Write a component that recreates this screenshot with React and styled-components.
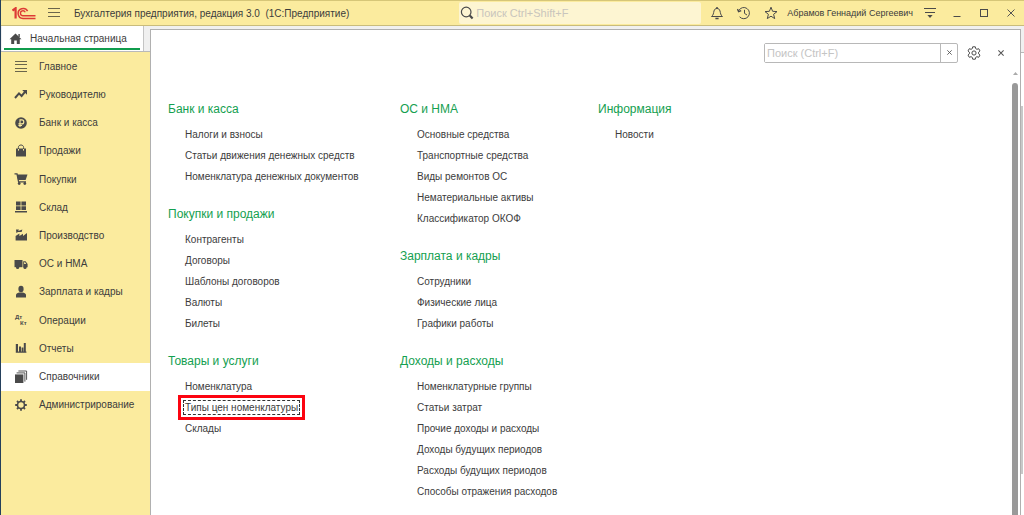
import React, { useState } from 'react'
import styled, { createGlobalStyle } from 'styled-components'

const GlobalStyle = createGlobalStyle`
    * {
        box-sizing: border-box;
    }
    body {
        margin: 0;
        font-family: "Liberation Sans", Arial, sans-serif;
        font-size: 10px;
        color: #3c3c3c;
        background: #fff;
    }
    button, input {
        font-family: inherit;
        color: inherit;
    }
    ul {
        list-style: none;
        margin: 0;
        padding: 0;
    }
    a {
        color: inherit;
        text-decoration: none;
    }
    svg {
        flex-shrink: 0;
    }
`;

const Window = styled.div`
    display: flex;
    flex-direction: column;
    min-height: 100vh;
    border-left: 1px solid #24405c;
`;

const TitleBar = styled.header`
    display: flex;
    align-items: center;
    height: 26px;
    padding: 0 0 0 11px;
    background: #fbeb9e;
    border-top: 1px solid #d6c678;
    border-bottom: 1px solid #c9bc7c;
`;

const IconButton = styled.button`
    display: flex;
    align-items: center;
    justify-content: center;
    flex-shrink: 0;
    width: ${props => props.$width || 27}px;
    height: 24px;
    padding: 0;
    border: none;
    background: none;
    color: #4a4a4a;
    cursor: pointer;
`;

const Title = styled.h1`
    flex: 1;
    margin: 0 0 0 3px;
    font-size: 10px;
    font-weight: 400;
    white-space: pre;
`;

const GlobalSearch = styled.label`
    display: flex;
    align-items: center;
    width: 242px;
    height: 22px;
    padding-left: 1px;
    margin-right: 2px;
    border-radius: 2px;
    background: #fdf5d2;
    & > input {
        flex: 1;
        min-width: 0;
        border: none;
        background: none;
        padding: 0 2px;
        font-size: 11px;
        outline: none;
    }
    & > input::placeholder {
        color: #c9c5bd;
        opacity: 1;
    }
`;

const UserName = styled.span`
    margin: 0 3px;
    font-size: 9px;
    white-space: nowrap;
`;

const Body = styled.div`
    display: flex;
    flex: 1;
    background: #f0f0f0;
`;

const LeftColumn = styled.div`
    display: flex;
    flex-direction: column;
    flex-shrink: 0;
    width: 149px;
`;

const TabStrip = styled.div`
    height: 26px;
    padding-left: 1px;
    border-bottom: 1px solid #b9b9b9;
`;

const Tab = styled.a`
    display: flex;
    align-items: center;
    width: 142px;
    height: 25px;
    padding-left: 7px;
    gap: 8px;
    background: #fff;
    border-right: 1px solid #c4c4c4;
    box-shadow: inset 2px -1px 0 #fff, inset -3px -1px 0 #fff, inset 0 -3px 0 #109c4c;
    white-space: nowrap;
`;

const Sidebar = styled.nav`
    flex: 1;
    background: #fbeb9e;
`;

const NavList = styled.ul`
    display: grid;
    grid-auto-rows: 1fr;
    min-height: 367px;
`;

const NavItem = styled.a`
    display: flex;
    align-items: center;
    height: 100%;
    padding-left: 12px;
    gap: 10px;
    background: ${props => props.$active ? '#fff' : 'transparent'};
    white-space: nowrap;
    & > svg {
        width: 16px;
        height: 16px;
    }
`;

const Panel = styled.main`
    display: flex;
    flex-direction: column;
    flex: 1;
    min-width: 0;
    margin-top: 3px;
    border: 1px solid #b0b0b0;
    border-bottom: none;
    background: #fff;
`;

const RightEdge = styled.div`
    display: flex;
    width: 3px;
    padding: 54px 1px 41px 0;
    border-top: 26px solid #f0f0f0;
    background: #fff;
    box-shadow: inset 0 1px 0 #b9b9b9;
`;

const BackScroll = styled.div`
    flex: 1;
    background: #c8c8c8;
`;

const PanelTools = styled.div`
    display: flex;
    align-items: center;
    justify-content: flex-end;
    height: 40px;
    padding: 5px 6px 0 0;
`;

const SearchBox = styled.div`
    display: flex;
    width: 194px;
    height: 20px;
    margin-right: 2px;
    border: 1px solid #b8b8b8;
    border-radius: 2px;
    & > input {
        flex: 1;
        min-width: 0;
        padding: 0 2px;
        border: none;
        font-size: 11px;
        outline: none;
    }
    & > input::placeholder {
        color: #c4c4c4;
        opacity: 1;
    }
    & > button {
        width: 17px;
        height: 18px;
        border-left: 1px solid #b8b8b8;
    }
`;

const PanelContent = styled.div`
    display: flex;
    flex: 1;
`;

const Columns = styled.div`
    display: grid;
    grid-template-columns: 232px 198px 1fr;
    align-items: start;
    flex: 1;
    padding: 25px 0 0 17px;
`;

const Column = styled.div`
    display: grid;
    gap: 13px;
`;

const SectionTitle = styled.h2`
    margin: 0;
    font-size: 12px;
    font-weight: 400;
    line-height: 29px;
    color: #14a050;
`;

const SectionLink = styled.li`
    display: flex;
    align-items: center;
    height: 21px;
    padding-left: 16px;
    & > a {
        padding: 0 1px;
        line-height: 13px;
        white-space: nowrap;
        outline: ${props => props.$selected ? '1px dashed #333' : 'none'};
        box-shadow: ${props => props.$selected ? '0 0 0 3px #fff, 0 0 0 6px #fc0410' : 'none'};
    }
`;

const ScrollBar = styled.div`
    display: flex;
    flex-direction: column;
    align-items: center;
    width: 10px;
    gap: 8px;
    padding-top: 2px;
`;

const ScrollThumb = styled.div`
    flex: 1;
    width: 6px;
    border-radius: 3px 3px 0 0;
    background: #999;
`;
// End of styled

const LogoIcon = () => <svg width="24" height="13" viewBox="0 0 24 13" fill="none" stroke="#dd3b35">
    <path d="M0.5 3.6 L3.6 1.2 V11.5" strokeWidth="2.2" />
    <path d="M15.6 4.2 A5 5 0 1 0 11 11.5 H23.5" strokeWidth="1.5" />
    <path d="M13.2 5.2 A2.5 2.5 0 1 0 11 8.8 H23.5" strokeWidth="1.4" />
</svg>

const BurgerIcon = () => <svg width="12" height="10" viewBox="0 0 12 10" fill="none" stroke="#6a654c">
    <path d="M0 0.5 H12 M0 4.5 H12 M0 8.5 H12" />
</svg>

const SearchIcon = () => <svg width="14" height="14" viewBox="0 0 14 14" fill="none" stroke="#4a4a4a">
    <circle cx="6.2" cy="6" r="4.8" strokeWidth="1.2" />
    <path d="M9.8 9.6 L12.6 12.6" strokeWidth="2.2" />
</svg>

const BellIcon = () => <svg width="14" height="14" viewBox="0 0 14 14" fill="none" stroke="#4a4a4a">
    <path d="M1.5 10.5 C3.6 9 3.4 7 4 5 C4.4 3.3 5.4 2.5 7 2.5 C8.6 2.5 9.6 3.3 10 5 C10.6 7 10.4 9 12.5 10.5 Z" />
    <path d="M7 1 V2.5 M5.4 12.6 H8.6" strokeWidth="1.5" />
</svg>

const HistoryIcon = () => <svg width="14" height="14" viewBox="0 0 14 14" fill="none" stroke="#4a4a4a">
    <path d="M1.8 4.6 A5.6 5.6 0 1 1 2.6 10.8" />
    <path d="M7.5 3.8 V7.4 L10 9" />
    <path d="M0.4 3 L1.6 5.6 L4.2 4.6" strokeWidth="1.4" />
</svg>

const StarIcon = () => <svg width="14" height="14" viewBox="0 0 14 14" fill="none" stroke="#4a4a4a">
    <path d="M7 1.2 L8.6 5.3 L13 5.6 L9.6 8.3 L10.7 12.6 L7 10.2 L3.3 12.6 L4.4 8.3 L1 5.6 L5.4 5.3 Z" />
</svg>

const MenuIcon = () => <svg width="12" height="12" viewBox="0 0 12 12" fill="none" stroke="#4a4a4a">
    <path d="M0 1.5 H12 M1 5.5 H11" />
    <path d="M3.4 8 H8.6 L6 11 Z" fill="#4a4a4a" stroke="none" />
</svg>

const MinimizeIcon = () => <svg width="8" height="10" viewBox="0 0 8 10" stroke="#4a4a4a">
    <path d="M0.5 8.5 H7.5" />
</svg>

const MaximizeIcon = () => <svg width="8" height="8" viewBox="0 0 8 8" fill="none" stroke="#4a4a4a">
    <rect x="0.5" y="0.5" width="7" height="7" />
</svg>

const CrossIcon = ({ size }) => <svg width={size} height={size} viewBox="0 0 8 8" fill="none" stroke="#555">
    <path d="M0.5 0.5 L7.5 7.5 M7.5 0.5 L0.5 7.5" strokeWidth={size < 8 ? 1.4 : 1} />
</svg>

const HomeIcon = () => <svg width="13" height="12" viewBox="0 0 13 12" fill="#4a4a4a">
    <path d="M6.5 0.6 L12.5 6.2 H10.8 V11 H7.8 V7.4 H5.2 V11 H2.2 V6.2 H0.5 Z" />
    <path d="M9.4 1 H10.8 V4 H9.4 Z" />
</svg>

const GearIcon = () => <svg width="14" height="14" viewBox="0 0 14 14" fill="none" stroke="#4a4a4a">
    <path d="M5.7 0.8 H8.3 L8.7 2.6 L9.9 3.3 L11.7 2.7 L13 4.9 L11.6 6.2 V7.8 L13 9.1 L11.7 11.3 L9.9 10.7 L8.7 11.4 L8.3 13.2 H5.7 L5.3 11.4 L4.1 10.7 L2.3 11.3 L1 9.1 L2.4 7.8 V6.2 L1 4.9 L2.3 2.7 L4.1 3.3 L5.3 2.6 Z" />
    <circle cx="7" cy="7" r="2.1" />
</svg>

const navIcons = {
    main: <path d="M2 3.5 H14 M2 6.5 H14 M2 10.5 H14 M2 13.5 H14" fill="none" stroke="#6a654c" />,
    chief: <>
        <path d="M2 12 L6 7.4 L8.6 10 L12 5.8" fill="none" stroke="#4a4a4a" strokeWidth="2" />
        <path d="M9.2 4 H14 V8.8 Z" />
    </>,
    bank: <>
        <circle cx="8" cy="8" r="5.8" />
        <path d="M7 12 V4.9 H8.8 A2 2 0 0 1 8.8 8.9 H5.4 M5.4 10.5 H9" fill="none" stroke="#fbeb9e" strokeWidth="1.1" />
    </>,
    sales: <>
        <path d="M3 5.5 H13 V13.5 H3 Z" />
        <path d="M5.4 7 V4.4 C5.4 1.2 10.6 1.2 10.6 4.4 V7" fill="none" stroke="#4a4a4a" />
        <path d="M5.5 6 V7.6 M10.5 6 V7.6" stroke="#fbeb9e" />
    </>,
    purchases: <>
        <path d="M1.5 2.8 H4 L5.6 10.8 H13" fill="none" stroke="#4a4a4a" strokeWidth="1.3" />
        <path d="M4 3.6 H14.5 L12.6 9 H5 Z" />
        <circle cx="6.2" cy="12.5" r="1.4" />
        <circle cx="11.8" cy="12.5" r="1.4" />
    </>,
    stock: <path d="M3 2.5 H7.6 V6.4 H3 Z M8.4 2.5 H13 V6.4 H8.4 Z M3 7.2 H7.6 V11 H3 Z M8.4 7.2 H13 V11 H8.4 Z M2 12 H14 V13.4 H2 Z" />,
    factory: <path d="M2.6 13.5 V9 L6.4 6.6 V9 L10 6.8 V9 L14 6 V13.5 Z M3 2.5 H6 L5.2 4 L9.4 2.6 L8.6 5 H5 L3.4 6 Z" />,
    truck: <>
        <path d="M1.5 4 H9.5 V11.2 H1.5 Z" />
        <path d="M10.2 5.2 H12.6 L14.6 8 V11.2 H10.2 Z M11.1 6.2 V8 H13.2 L12.1 6.2 Z" fillRule="evenodd" />
        <circle cx="4.6" cy="11.4" r="1.6" />
        <circle cx="12" cy="11.4" r="1.6" />
    </>,
    person: <>
        <ellipse cx="8" cy="5" rx="2.6" ry="3.2" />
        <path d="M3 13.4 V11 C3 9.4 5 8.8 6.4 8.4 H9.6 C11 8.8 13 9.4 13 11 V13.4 Z" />
    </>,
    entries: <g fontSize="6" fontWeight="700">
        <text x="2" y="7">Дт</text>
        <text x="7" y="13">Кт</text>
    </g>,
    reports: <path d="M2.8 4 H5 V11.5 H6 V6.4 H8 V11.5 H8.6 V7.4 H10.4 V11.5 H10.8 V3 H12.8 V11.5 H13.4 V12.8 H2.8 Z" />,
    books: <>
        <path d="M2 5.4 H10.4 V14 H2 Z" />
        <path d="M3.6 3.9 H11.9 V12.6 M5.4 2 H13.6 V10.8" fill="none" stroke="#555" />
    </>,
    admin: <>
        <circle cx="8" cy="8" r="3.5" fill="none" stroke="#4a4a4a" strokeWidth="1.6" />
        <path d="M8 2.2 V4.6 M8 11.4 V13.8 M2.2 8 H4.6 M11.4 8 H13.8 M4 4 L5.6 5.6 M10.4 10.4 L12 12 M12 4 L10.4 5.6 M5.6 10.4 L4 12" stroke="#4a4a4a" strokeWidth="1.8" />
    </>,
}

const navItems = [
    { icon: 'main', label: 'Главное' },
    { icon: 'chief', label: 'Руководителю' },
    { icon: 'bank', label: 'Банк и касса' },
    { icon: 'sales', label: 'Продажи' },
    { icon: 'purchases', label: 'Покупки' },
    { icon: 'stock', label: 'Склад' },
    { icon: 'factory', label: 'Производство' },
    { icon: 'truck', label: 'ОС и НМА' },
    { icon: 'person', label: 'Зарплата и кадры' },
    { icon: 'entries', label: 'Операции' },
    { icon: 'reports', label: 'Отчеты' },
    { icon: 'books', label: 'Справочники' },
    { icon: 'admin', label: 'Администрирование' },
]

const columns = [
    [
        { title: 'Банк и касса', links: ['Налоги и взносы', 'Статьи движения денежных средств', 'Номенклатура денежных документов'] },
        { title: 'Покупки и продажи', links: ['Контрагенты', 'Договоры', 'Шаблоны договоров', 'Валюты', 'Билеты'] },
        { title: 'Товары и услуги', links: ['Номенклатура', 'Типы цен номенклатуры', 'Склады'] },
    ],
    [
        { title: 'ОС и НМА', links: ['Основные средства', 'Транспортные средства', 'Виды ремонтов ОС', 'Нематериальные активы', 'Классификатор ОКОФ'] },
        { title: 'Зарплата и кадры', links: ['Сотрудники', 'Физические лица', 'Графики работы'] },
        { title: 'Доходы и расходы', links: ['Номенклатурные группы', 'Статьи затрат', 'Прочие доходы и расходы', 'Доходы будущих периодов', 'Расходы будущих периодов', 'Способы отражения расходов'] },
    ],
    [
        { title: 'Информация', links: ['Новости'] },
    ],
]

const Header = () => <TitleBar>
    <LogoIcon />
    <IconButton $width={35} aria-label="Главное меню"><BurgerIcon /></IconButton>
    <Title>Бухгалтерия предприятия, редакция 3.0  (1С:Предприятие)</Title>
    <GlobalSearch>
        <SearchIcon />
        <input type="text" aria-label="Глобальный поиск" placeholder="Поиск Ctrl+Shift+F" />
    </GlobalSearch>
    <IconButton aria-label="Уведомления"><BellIcon /></IconButton>
    <IconButton aria-label="История"><HistoryIcon /></IconButton>
    <IconButton aria-label="Избранное"><StarIcon /></IconButton>
    <UserName>Абрамов Геннадий Сергеевич</UserName>
    <IconButton aria-label="Настройки окна"><MenuIcon /></IconButton>
    <IconButton aria-label="Свернуть"><MinimizeIcon /></IconButton>
    <IconButton aria-label="Развернуть"><MaximizeIcon /></IconButton>
    <IconButton aria-label="Закрыть"><CrossIcon size={8} /></IconButton>
</TitleBar>

const Section = ({ title, links, selected, onSelect }) => <section>
    <SectionTitle>{title}</SectionTitle>
    <ul>
        {links.map(link => <SectionLink key={link} $selected={link === selected}>
            <a href="#" onClick={() => onSelect(link)}>{link}</a>
        </SectionLink>)}
    </ul>
</section>

const App = () => {
    const [active, setActive] = useState('books')
    const [selected, setSelected] = useState('Типы цен номенклатуры')
    return (
        <Window>
            <GlobalStyle />
            <Header />
            <Body>
                <LeftColumn>
                    <TabStrip>
                        <Tab href="#"><HomeIcon />Начальная страница</Tab>
                    </TabStrip>
                    <Sidebar>
                        <NavList>
                            {navItems.map(item => <li key={item.icon}>
                                <NavItem href="#" $active={item.icon === active} onClick={() => setActive(item.icon)}>
                                    <svg viewBox="0 0 16 16" fill="#4a4a4a">{navIcons[item.icon]}</svg>
                                    {item.label}
                                </NavItem>
                            </li>)}
                        </NavList>
                    </Sidebar>
                </LeftColumn>
                <Panel>
                    <PanelTools>
                        <SearchBox>
                            <input type="text" aria-label="Поиск" placeholder="Поиск (Ctrl+F)" />
                            <IconButton aria-label="Очистить"><CrossIcon size={5} /></IconButton>
                        </SearchBox>
                        <IconButton aria-label="Настройка"><GearIcon /></IconButton>
                        <IconButton aria-label="Закрыть панель"><CrossIcon size={6} /></IconButton>
                    </PanelTools>
                    <PanelContent>
                        <Columns>
                            {columns.map((sections, index) => <Column key={index}>
                                {sections.map(section => <Section
                                    key={section.title}
                                    {...section}
                                    selected={selected}
                                    onSelect={setSelected}
                                />)}
                            </Column>)}
                        </Columns>
                        <ScrollBar>
                            <svg width="5" height="3" viewBox="0 0 5 3" fill="#aaa"><path d="M0 3 L2.5 0 L5 3 Z" /></svg>
                            <ScrollThumb />
                        </ScrollBar>
                    </PanelContent>
                </Panel>
                <RightEdge><BackScroll /></RightEdge>
            </Body>
        </Window>
    )
}

export default App
